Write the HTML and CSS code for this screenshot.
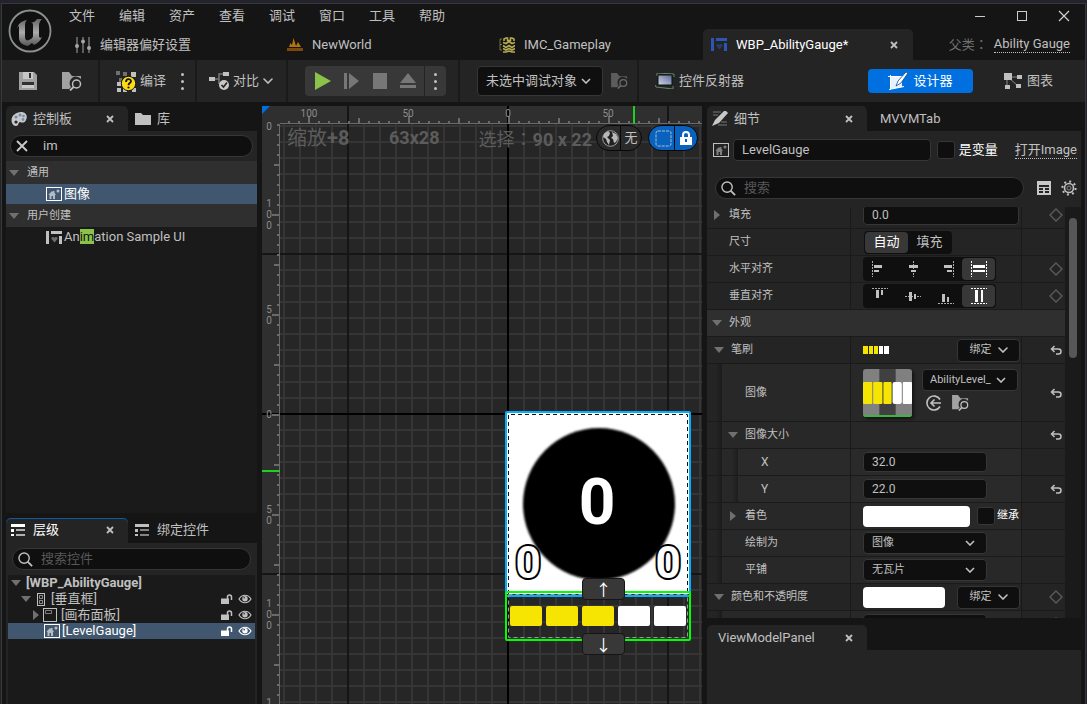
FILE: index.html
```html
<!DOCTYPE html>
<html lang="zh-CN">
<head>
    <meta charset="UTF-8">
    <meta name="viewport" content="width=device-width, initial-scale=1.0">
    <title>WBP_AbilityGauge</title>
    <link rel="stylesheet" href="styles.css">
</head>
<body>
    <!-- shared icons -->
    <svg class="defs" aria-hidden="true">
        <symbol id="i-close" viewBox="0 0 8 8"><path d="M1 1l6 6M7 1L1 7" stroke="currentColor" stroke-width="1.8" fill="none"/></symbol>
        <symbol id="i-chev" viewBox="0 0 10 6"><path d="M1 1l4 4 4-4" stroke="currentColor" stroke-width="1.6" fill="none" stroke-linecap="round"/></symbol>
        <symbol id="i-down" viewBox="0 0 10 6"><path d="M0 0h10L5 6z" fill="#707070"/></symbol>
        <symbol id="i-right" viewBox="0 0 6 10"><path d="M0 0l6 5-6 5z" fill="#707070"/></symbol>
        <symbol id="i-search" viewBox="0 0 16 16"><circle cx="6.5" cy="6.5" r="5.5" stroke="currentColor" stroke-width="1.5" fill="none"/><path d="M10.5 10.5L15 15" stroke="currentColor" stroke-width="2"/></symbol>
        <symbol id="i-browse" viewBox="0 0 20 19"><path d="M0 0h7l3 4h9v3a6 6 0 0 0-10 8l-2 2H0z" fill="currentColor" opacity=".8"/><circle cx="14.500" cy="12" r="4" stroke="currentColor" stroke-width="1.500" fill="none"/><path d="M11.500 15L8 18.500" stroke="currentColor" stroke-width="1.800"/></symbol>
        <symbol id="i-image" viewBox="0 0 16 14"><rect x=".5" y=".5" width="15" height="13" fill="none" stroke="currentColor"/><path d="M2.500 7.500L6 4l1 1V4h1.500v2L10 7.500 9 8v4H7V9H5.500v3H3.500V8z" fill="currentColor" opacity=".6"/><circle cx="12" cy="4" r="1.500" fill="currentColor" opacity=".6"/></symbol>
        <symbol id="i-widget" viewBox="0 0 16 13"><path d="M0 0h3v13H0zM5 0h11v3H5zM13 5h3v8h-3z" fill="currentColor"/><path d="M8.500 11.500L5.500 8a1.500 1.500 0 0 1 3-1 1.500 1.500 0 0 1 3 1z" fill="currentColor" opacity=".5"/></symbol>
        <symbol id="i-list" viewBox="0 0 14 12"><path d="M0 0h14v3H0zM0 5h3v3H0zM0 10h3v2H0z" fill="currentColor"/><path d="M5 5h9v2H5zM5 10h9v2H5z" fill="currentColor" opacity=".65"/></symbol>
        <symbol id="i-unlock" viewBox="0 0 12 11"><path d="M0 4.500h8V10H0z" fill="currentColor"/><path d="M6.500 5V3a2 2 0 0 1 4 0v3" stroke="currentColor" stroke-width="1.500" fill="none"/></symbol>
        <symbol id="i-eye" viewBox="0 0 14 10"><path d="M1 5c3-5 9-5 12 0-3 5-9 5-12 0z" fill="none" stroke="currentColor" stroke-width="1.200"/><circle cx="7" cy="4.800" r="2.700" fill="currentColor"/><circle cx="6.200" cy="3.800" r=".8" fill="#222"/></symbol>
        <symbol id="i-reset" viewBox="0 0 12 10"><path d="M4.500 1L1.500 4l3 3M2 4h6.500a2.300 2.300 0 0 1 0 5H6" stroke="currentColor" stroke-width="1.500" fill="none"/></symbol>
        <symbol id="i-diamond" viewBox="0 0 14 14"><path d="M7 1l6 6-6 6-6-6z" stroke="#5c5c5c" stroke-width="1.300" fill="none"/></symbol>
    </svg>

    <div class="window">
        <header class="header">
            <svg class="logo" viewBox="0 0 44 44" role="img" aria-label="Unreal">
                <defs><linearGradient id="metal" x1="0" y1="0" x2="0" y2="1"><stop offset="0" stop-color="#666"/><stop offset=".5" stop-color="#aaa"/><stop offset="1" stop-color="#555"/></linearGradient></defs>
                <circle cx="22" cy="22" r="20.500" fill="#101010" stroke="#8c9090" stroke-width="1.800"/>
                <path d="M9 20c1-5 4-8 10-9-2 2-2 4-2 6v11c0 3 2 4 4 3 2-1 4-2 4-4V16c0-2-1-2-2-2 3-1 5-2 6-4h5c-2 2-3 4-3 6v11c0 2 2 2 3 1-2 4-4 6-8 8l-2-2-4 3c-6-1-9-4-9-8V18c0-2-1-1-2 2z" fill="url(#metal)"/>
            </svg>
            <div class="header-main">
                <div class="menu-row">
                    <nav class="menu">
                        <button>文件</button><button>编辑</button><button>资产</button><button>查看</button><button>调试</button><button>窗口</button><button>工具</button><button>帮助</button>
                    </nav>
                    <div class="win-buttons">
                        <button aria-label="最小化"><svg width="12" height="12"><path d="M1 6.500h10" stroke="#ccc"/></svg></button>
                        <button aria-label="最大化"><svg width="12" height="12"><rect x="1.500" y="1.500" width="9" height="9" stroke="#ccc" fill="none"/></svg></button>
                        <button aria-label="关闭"><svg width="12" height="12"><path d="M1 1l10 10M11 1L1 11" stroke="#ccc" stroke-width="1.300"/></svg></button>
                    </div>
                </div>
                <div class="doc-tabs">
                    <a href="#" class="doc-tab">
                        <svg width="16" height="16" viewBox="0 0 16 16" fill="#c0c0c0" opacity=".85"><path d="M1.500 0h1v16h-1zM7.500 0h1v16h-1zM13.500 0h1v16h-1z"/><circle cx="2" cy="9" r="2"/><circle cx="8" cy="4.500" r="2"/><circle cx="14" cy="11" r="2"/></svg>
                        <span>编辑器偏好设置</span>
                    </a>
                    <a href="#" class="doc-tab">
                        <svg width="16" height="13" viewBox="0 0 16 13"><path d="M2 9l1.500-4L5 7l1.500-7L9 8l2-4 3 5z" fill="#b8740c"/><path d="M0 10h16v3H0z" fill="#7a4a0a"/></svg>
                        <span>NewWorld</span>
                    </a>
                    <a href="#" class="doc-tab">
                        <svg width="16" height="16" viewBox="0 0 16 16" fill="none" stroke="#b5ab50" stroke-width="1.600"><path d="M3 2H1v11h2M1 7.500h2" stroke-width="1" opacity=".6"/><path d="M5 4V2l2-1h1.500v2.500h3V1H13l2 1v2M4 5.500l3 1 3-2 3 2 3-1M4 8.500l3 2 3-2 3 2 3-2M4 11.500l3 1.500 3-1.500 3 1.500 3-1.500M4 15h3l3-1 3 1h3"/></svg>
                        <span>IMC_Gameplay</span>
                    </a>
                    <a href="#" class="doc-tab active">
                        <svg class="blue" width="16" height="13"><use href="#i-widget"/></svg>
                        <span>WBP_AbilityGauge*</span>
                        <svg class="tab-x" width="8" height="8"><use href="#i-close"/></svg>
                    </a>
                    <div class="parent-class"><span>父类<span class="colon" lang="zh-Hant">：</span></span><a href="#">Ability Gauge</a></div>
                </div>
            </div>
        </header>

        <div class="toolbar">
            <div class="tool-group save-group">
                <button aria-label="保存"><svg width="18" height="18" viewBox="0 0 18 18"><path d="M0 0h15l3 3v15H0z" fill="#a0a0a0"/><path d="M4 0h10v7H4z" fill="#c8c8c8"/><path d="M10 1h2v5h-2zM3 10h12v6H3z" fill="#303030"/><path d="M3 13h12v3H3z" fill="#c8c8c8"/></svg></button>
                <button aria-label="浏览"><svg width="20" height="19"><use href="#i-browse"/></svg></button>
            </div>
            <div class="tool-group compile-group">
                <button>
                    <svg width="20" height="21" viewBox="0 0 20 21"><path d="M0 0h4v4H0zM7 1h4v4H7zM3 7h3v4H3z" fill="#707070"/><path d="M15 1h5v5h-5zM1 11h4v4H1zM1 17h4v4H1zM16 17h4v4h-4zM7 16h4v5H7z" fill="#c0c0c0"/><circle cx="12.500" cy="12.500" r="7.200" fill="#fedc12" stroke="#151515"/><path d="M10 11c0-4 5-3.500 5-.8 0 2-2.500 1.800-2.500 4" stroke="#151515" stroke-width="1.800" fill="none"/><circle cx="12.500" cy="16.500" r="1.100" fill="#151515"/></svg>
                    <span>编译</span>
                </button>
                <button class="dots" aria-label="编译选项"><i></i><i></i><i></i></button>
            </div>
            <div class="tool-group diff-group">
                <button>
                    <svg width="20" height="20" viewBox="0 0 20 20"><path d="M6 8h4V3h5M10 8v5" stroke="#777" stroke-width="1.500" fill="none"/><path d="M0 6h6v4H0zM14 1h6v4h-6z" fill="#c0c0c0"/><circle cx="15" cy="14" r="5" fill="#c8c8c8"/><path d="M12.500 14l2 2 3.500-4.500" stroke="#222" stroke-width="1.600" fill="none"/></svg>
                    <span>对比</span>
                    <svg width="10" height="6"><use href="#i-chev"/></svg>
                </button>
            </div>
            <div class="tool-group play-group">
                <div class="play-box">
                    <button aria-label="播放"><svg width="16" height="18"><path d="M0 0l16 9-16 9z" fill="#8bc24a"/></svg></button>
                    <button aria-label="步进"><svg width="16" height="16"><path d="M0 0h3v16H0zM5 0l10 8-10 8z" fill="#777"/></svg></button>
                    <button aria-label="停止"><svg width="14" height="16"><path d="M0 0h14v16H0z" fill="#777"/></svg></button>
                    <button aria-label="弹出"><svg width="16" height="16"><path d="M8 0l8 10H0zM0 12h16v3H0z" fill="#777"/></svg></button>
                    <button class="dots" aria-label="播放选项"><i></i><i></i><i></i></button>
                </div>
            </div>
            <div class="tool-group debug-group">
                <select class="dropdown debug-select" aria-label="调试对象"><option>未选中调试对象</option></select>
                <button class="dim" aria-label="浏览调试对象"><svg width="17" height="16"><use href="#i-browse"/></svg></button>
            </div>
            <div class="tool-group reflector-group">
                <button>
                    <svg width="20" height="16" viewBox="0 0 20 16"><defs><linearGradient id="scr" x1="0" y1="1" x2="1" y2="0"><stop offset="0" stop-color="#cfd6ec"/><stop offset="1" stop-color="#5d6990"/></linearGradient></defs><path d="M2 3V0l17 1v3M0 12l1 2 17 2v-3" stroke="#5f8a65" fill="none"/><path d="M3 2h14v10H3z" fill="url(#scr)" stroke="#111"/></svg>
                    <span>控件反射器</span>
                </button>
            </div>
            <div class="mode-buttons">
                <button class="designer">
                    <svg width="20" height="19" viewBox="0 0 20 19"><path d="M2 5h12v10L3 17z" fill="#e8f2ff"/><path d="M0 4.500h15M2.500 3v15M1 17.500l15-3" stroke="#fff" fill="none"/><path d="M18 0l2 1-7 10-5 3 2-5z" fill="#fff" stroke="#0a4a92" stroke-width=".8"/></svg>
                    <span>设计器</span>
                </button>
                <button class="graph">
                    <svg width="18" height="16" viewBox="0 0 18 16"><path d="M4 4h11M5 5l9 8M3 6v8" stroke="#888" fill="none"/><path d="M0 0h8v7H0zM13 2h5v4h-5zM1 12h5v4H1zM12 11h5v4h-5z" fill="#c0c0c0"/></svg>
                    <span>图表</span>
                </button>
            </div>
        </div>

        <main class="workspace">
            <aside class="left-col">
                <section class="panel palette">
                    <div class="tabs">
                        <button class="tab active">
                            <svg width="16" height="14" viewBox="0 0 16 14"><path d="M1 11C-1 5 4 0 10 0c5 0 7 4 5 8-1 3-4 3-6 2-2 0-1 4-4 4-2 0-3-1-4-3z" fill="#c8c8c8"/><circle cx="5" cy="10" r="1.600" fill="#252525"/><circle cx="5" cy="5" r="1.500" fill="#6d8db5"/><circle cx="9" cy="3" r="1.500" fill="#6d8db5"/><circle cx="12.500" cy="4" r="1.300" fill="#6d8db5"/><circle cx="12" cy="7.500" r="1.400" fill="#6d8db5"/></svg>
                            <span>控制板</span><svg class="tab-x" width="8" height="8"><use href="#i-close"/></svg>
                        </button>
                        <button class="tab">
                            <svg width="16" height="12" viewBox="0 0 16 12"><path d="M0 0h6l2 2h8v10H0z" fill="#c0c0c0"/></svg><span>库</span>
                        </button>
                    </div>
                    <div class="palette-search">
                        <div class="search">
                            <button aria-label="清除"><svg width="12" height="12" viewBox="0 0 12 12"><path d="M1 1l10 10M11 1L1 11" stroke="#ccc" stroke-width="1.800"/></svg></button>
                            <input type="text" value="im" aria-label="搜索控制板">
                        </div>
                    </div>
                    <div class="palette-list">
                        <div class="category"><svg width="10" height="6"><use href="#i-down"/></svg>通用</div>
                        <div class="entry selected"><svg width="16" height="14"><use href="#i-image"/></svg><span>图像</span></div>
                        <div class="category"><svg width="10" height="6"><use href="#i-down"/></svg>用户创建</div>
                        <div class="entry"><svg width="16" height="13"><use href="#i-widget"/></svg><span>An<mark>im</mark>ation Sample UI</span></div>
                    </div>
                </section>

                <section class="panel hierarchy">
                    <div class="tabs">
                        <button class="tab active focused"><svg width="14" height="12"><use href="#i-list"/></svg><span>层级</span><svg class="tab-x" width="8" height="8"><use href="#i-close"/></svg></button>
                        <button class="tab"><svg width="14" height="12"><use href="#i-list"/></svg><span>绑定控件</span></button>
                    </div>
                    <div class="tree-search">
                        <div class="search"><svg width="15" height="15"><use href="#i-search"/></svg><input type="text" placeholder="搜索控件" aria-label="搜索控件"></div>
                    </div>
                    <ul class="tree">
                        <li class="lv0"><svg width="10" height="6"><use href="#i-down"/></svg><b>[WBP_AbilityGauge]</b></li>
                        <li class="lv1"><svg width="10" height="6"><use href="#i-down"/></svg><svg width="8" height="13" viewBox="0 0 8 13" fill="none" stroke="#c0c0c0"><rect x=".5" y=".5" width="7" height="12"/><path d="M2.500 2.500h3v3h-3zM2.500 7.500h3v3h-3z" opacity=".7"/></svg><span>[垂直框]</span>
                            <span class="row-icons"><svg width="12" height="11"><use href="#i-unlock"/></svg><svg width="14" height="10"><use href="#i-eye"/></svg></span></li>
                        <li class="lv2"><svg width="6" height="10"><use href="#i-right"/></svg><svg width="14" height="14" viewBox="0 0 14 14" fill="none" stroke="#c0c0c0"><rect x=".5" y=".5" width="13" height="13"/><path d="M2.500 2.500h6v3h-6z" opacity=".6"/></svg><span>[画布面板]</span>
                            <span class="row-icons"><svg width="12" height="11"><use href="#i-unlock"/></svg><svg width="14" height="10"><use href="#i-eye"/></svg></span></li>
                        <li class="lv3 selected"><svg width="16" height="14"><use href="#i-image"/></svg><span>[LevelGauge]</span>
                            <span class="row-icons"><svg width="12" height="11"><use href="#i-unlock"/></svg><svg width="14" height="10"><use href="#i-eye"/></svg></span></li>
                    </ul>
                </section>
            </aside>

            <section class="canvas">
                <svg class="grid" width="100%" height="100%">
                    <defs>
                        <pattern id="cells" width="16" height="16" patternUnits="userSpaceOnUse"><path d="M5 0h2v16H5zM0 3h16v2H0z" fill="#353535"/></pattern>
                        <pattern id="major" width="160" height="160" patternUnits="userSpaceOnUse"><path d="M85 0h2v160h-2zM0 147h160v2H0z" fill="#151515"/></pattern>
                        <pattern id="ticks-x" width="100" height="18" patternUnits="userSpaceOnUse"><path d="M46 10h2v7h-2zM96 12h2v5h-2zM6 15h2v2H6zM16 15h2v2h-2zM26 15h2v2h-2zM36 15h2v2h-2zM56 15h2v2h-2zM66 15h2v2h-2zM76 15h2v2h-2zM86 15h2v2h-2z" fill="#6a6a6a"/></pattern>
                        <pattern id="ticks-y" width="18" height="100" patternUnits="userSpaceOnUse"><path d="M10 8h8v2h-8zM12 58h6v2h-6zM15 18h3v2h-3zM15 28h3v2h-3zM15 38h3v2h-3zM15 48h3v2h-3zM15 68h3v2h-3zM15 78h3v2h-3zM15 88h3v2h-3zM15 98h3v2h-3z" fill="#6a6a6a"/></pattern>
                    </defs>
                    <rect width="100%" height="100%" fill="#2f2f2f"/>
                    <rect x="18" y="18" width="100%" height="100%" fill="#262626"/>
                    <rect x="18" y="18" width="100%" height="100%" fill="url(#cells)"/>
                    <rect width="100%" height="100%" fill="url(#major)"/>
                    <path d="M245 0h2v2000h-2zM0 307h2000v2H0z" fill="#000"/>
                    <rect x="18" width="100%" height="18" fill="url(#ticks-x)"/>
                    <rect y="18" width="18" height="100%" fill="url(#ticks-y)"/>
                    <path d="M18 17.500h2000M17.500 18v2000" stroke="#6a6a6a"/>
                    <path d="M0 0h8L0 8z" fill="#0070e0"/>
                    <path d="M371 0h2v18h-2zM0 364h18v2H0z" fill="#1fd01f"/>
                    <g class="ruler-text">
                        <text x="47" y="11">100</text><text x="146" y="11">50</text><text x="246" y="11">0</text><text x="346" y="11">50</text>
                        <text x="7" y="24">0</text>
                        <text x="7" y="101">1</text><text x="7" y="112">0</text><text x="7" y="123">0</text>
                        <text x="7" y="207">5</text><text x="7" y="218">0</text>
                        <text x="7" y="312">0</text>
                        <text x="7" y="407">5</text><text x="7" y="418">0</text>
                        <text x="7" y="501">1</text><text x="7" y="512">0</text><text x="7" y="523">0</text>
                        <text x="7" y="600">1</text>
                    </g>
                </svg>

                <div class="canvas-info">
                    <span class="zoom">缩放<b>+8</b></span>
                    <b>63x28</b>
                    <span class="sel">选择<span class="colon" lang="zh-Hant">：</span><b>90 x 22</b></span>
                    <div class="pill">
                        <button aria-label="本地化预览"><svg width="17" height="17" viewBox="0 0 17 17"><circle cx="8.500" cy="8.500" r="7.800" fill="#202020" stroke="#a0a0a0"/><path d="M2 4l4-3 2 2-1 3-2 1 3 3-1 5-2-3-1-3-3-2zM10 2l4 2 2 4-2 4-2 1-1-4-2-1 2-2z" fill="#b8b8b8"/></svg></button>
                        <button>无</button>
                    </div>
                    <div class="pill on">
                        <button aria-label="显示轮廓"><svg width="17" height="17"><rect x="1" y="1" width="15" height="15" rx="2" fill="none" stroke="#a9bdd3" stroke-dasharray="3 1"/></svg></button>
                        <button aria-label="锁定"><svg width="12" height="14"><path d="M0 6h12v8H0z" fill="#fff"/><path d="M3 7V4a3 3 0 0 1 6 0v3" stroke="#fff" stroke-width="2" fill="none"/><path d="M5 8h2v3H5z" fill="#0a62bf"/></svg></button>
                    </div>
                </div>

                <div class="artboard">
                    <svg width="186" height="230" viewBox="0 0 186 230">
                        <defs><filter id="soft"><feGaussianBlur stdDeviation="1"/></filter></defs>
                        <path d="M2 2h182v181H2z" fill="#fff"/>
                        <circle cx="94" cy="93" r="76" filter="url(#soft)"/>
                        <path d="M3.500 183V3.500h179V183" fill="none" stroke="#111" stroke-dasharray="4 3"/>
                        <text x="92" y="113" class="digit-big">0</text>
                        <text x="23" y="167" class="digit-small">0</text>
                        <text x="163" y="167" class="digit-small">0</text>
                        <rect x="1" y="1" width="184" height="184" rx="1" fill="none" stroke="#00b0ff" stroke-width="2"/>
                        <rect x="1" y="181" width="184" height="48" rx="1" fill="none" stroke="#0f0" stroke-width="2"/>
                        <path d="M3.500 183.500h179v43H3.500z" fill="none" stroke="#999" stroke-dasharray="4 3"/>
                        <g fill="#f6e503"><rect x="5" y="195" width="32" height="20" rx="2"/><rect x="41" y="195" width="32" height="20" rx="2"/><rect x="77" y="195" width="32" height="20" rx="2"/></g>
                        <g fill="#fff"><rect x="113" y="195" width="32" height="20" rx="2"/><rect x="149" y="195" width="32" height="20" rx="2"/></g>
                    </svg>
                    <button class="move up" aria-label="上移">↑</button>
                    <button class="move down" aria-label="下移">↓</button>
                </div>
            </section>

            <aside class="right-col">
                <section class="panel details">
                    <div class="tabs">
                        <button class="tab active"><svg width="16" height="15" viewBox="0 0 16 15"><path d="M14 0l2 2-9 10-7 3 3-6 9-9z" fill="#c8c8c8"/><path d="M1 1h8M1 4h5M9 11h6M6 14h9" stroke="#777"/></svg><span>细节</span><svg class="tab-x" width="8" height="8"><use href="#i-close"/></svg></button>
                        <button class="tab">MVVMTab</button>
                    </div>
                    <div class="details-head">
                        <div class="name-row">
                            <svg width="16" height="14"><use href="#i-image"/></svg>
                            <input class="name-input" type="text" value="LevelGauge" aria-label="名称">
                            <label><input type="checkbox">是变量</label>
                            <a href="#">打开Image</a>
                        </div>
                        <div class="filter-row">
                            <div class="search"><svg width="15" height="15"><use href="#i-search"/></svg><input type="text" placeholder="搜索" aria-label="搜索"></div>
                            <button aria-label="表格视图"><svg width="14" height="14"><path d="M0 0h14v14H0z" fill="#c8c8c8"/><path d="M2 4h10v2H2zM2 7h4v2H2zM8 7h4v2H8zM2 10h4v2H2zM8 10h4v2H8z" fill="#242424"/></svg></button>
                            <button aria-label="设置"><svg width="16" height="16" viewBox="0 0 16 16"><circle cx="8" cy="8" r="4.500" fill="none" stroke="#c0c0c0" stroke-width="1.600"/><circle cx="8" cy="8" r="6.600" fill="none" stroke="#c0c0c0" stroke-width="2" stroke-dasharray="2 3.180"/><circle cx="8" cy="8" r="2" fill="none" stroke="#888"/></svg></button>
                        </div>
                    </div>
                    <div class="props-wrap">
                        <div class="props">
                            <div class="prop"><div class="name"><svg width="6" height="10"><use href="#i-right"/></svg>填充</div><div class="value"><input class="num wide" type="text" value="0.0" aria-label="填充"></div><div class="ext"><svg width="14" height="14"><use href="#i-diamond"/></svg></div></div>
                            <div class="prop"><div class="name plain">尺寸</div><div class="value"><div class="segment"><button class="on">自动</button><button>填充</button></div></div><div class="ext"></div></div>
                            <div class="prop"><div class="name plain">水平对齐</div><div class="value"><div class="align">
                                <button aria-label="左对齐"><svg width="16" height="16"><path d="M.5 0v16" stroke="#aaa" stroke-dasharray="2 1"/><path d="M2 4h8v3H2zM2 9h5v2H2z" fill="#c0c0c0"/></svg></button>
                                <button aria-label="居中"><svg width="16" height="16"><path d="M8.500 0v16" stroke="#aaa" stroke-dasharray="2 1"/><path d="M4 4h9v3H4zM6 9h5v2H6z" fill="#c0c0c0"/></svg></button>
                                <button aria-label="右对齐"><svg width="16" height="16"><path d="M15.500 0v16" stroke="#aaa" stroke-dasharray="2 1"/><path d="M6 4h8v3H6zM9 9h5v2H9z" fill="#c0c0c0"/></svg></button>
                                <button class="on" aria-label="水平填充"><svg width="16" height="16"><path d="M.5 0v16M15.500 0v16" stroke="#fff" stroke-dasharray="2 1"/><path d="M2 4h12v3H2zM2 9h12v2H2z" fill="#fff"/></svg></button>
                            </div></div><div class="ext"><svg width="14" height="14"><use href="#i-diamond"/></svg></div></div>
                            <div class="prop"><div class="name plain">垂直对齐</div><div class="value"><div class="align">
                                <button aria-label="顶部对齐"><svg width="16" height="16"><path d="M0 .5h16" stroke="#aaa" stroke-dasharray="2 1"/><path d="M4 2h3v8H4zM9 2h2v5H9z" fill="#c0c0c0"/></svg></button>
                                <button aria-label="居中"><svg width="16" height="16"><path d="M0 8.500h16" stroke="#aaa" stroke-dasharray="2 1"/><path d="M4 4h3v9H4zM9 6h2v5H9z" fill="#c0c0c0"/></svg></button>
                                <button aria-label="底部对齐"><svg width="16" height="16"><path d="M0 15.500h16" stroke="#aaa" stroke-dasharray="2 1"/><path d="M4 6h3v8H4zM9 9h2v5H9z" fill="#c0c0c0"/></svg></button>
                                <button class="on" aria-label="垂直填充"><svg width="16" height="16"><path d="M0 .5h16M0 15.500h16" stroke="#fff" stroke-dasharray="2 1"/><path d="M4 2h3v12H4zM10 2h2v12h-2z" fill="#fff"/></svg></button>
                            </div></div><div class="ext"><svg width="14" height="14"><use href="#i-diamond"/></svg></div></div>
                            <div class="prop-cat"><svg width="10" height="6"><use href="#i-down"/></svg>外观</div>
                            <div class="prop"><div class="name group"><svg width="10" height="6"><use href="#i-down"/></svg>笔刷</div><div class="value spread"><svg width="26" height="8" viewBox="0 0 26 8"><path d="M0 0h5v8H0zM6 0h4v8H6zM11 0h4v8h-4z" fill="#f6e503"/><path d="M16 0h4v8h-4zM21 0h5v8h-5z" fill="#fff"/></svg><button class="bind">绑定<svg width="10" height="6"><use href="#i-chev"/></svg></button></div><div class="ext"><svg width="12" height="10"><use href="#i-reset"/></svg></div></div>
                            <div class="prop tall d1"><div class="name plain">图像</div><div class="value asset">
                                <svg class="thumb" width="49" height="48" viewBox="0 0 48 48" preserveAspectRatio="none"><path d="M0 0h48v48H0z" fill="#808080"/><path d="M16 0h16v48H16z" fill="#404040"/><g fill="#f6e503"><rect y="13" width="9" height="22" rx="1"/><rect x="10" y="13" width="9" height="22" rx="1"/><rect x="20" y="13" width="8" height="22" rx="1"/></g><g fill="#fff"><rect x="29" y="13" width="9" height="22" rx="2"/><rect x="39" y="13" width="9" height="22" rx="1"/></g><path d="M0 46h48v2H0z" fill="#3fb43f"/></svg>
                                <div class="asset-side">
                                    <select class="dropdown asset-select" aria-label="图像资产"><option>AbilityLevel_</option></select>
                                    <div class="asset-tools">
                                        <button aria-label="使用所选资产"><svg width="16" height="16" viewBox="0 0 16 16" fill="none" stroke="#c0c0c0" stroke-width="1.600"><path d="M14 4.500a7 7 0 1 0 0 7M15 8H5M8.500 4.500L5 8l3.500 3.500"/></svg></button>
                                        <button aria-label="浏览到资产"><svg width="17" height="16"><use href="#i-browse"/></svg></button>
                                    </div>
                                </div></div><div class="ext"><svg width="12" height="10"><use href="#i-reset"/></svg></div></div>
                            <div class="prop d1"><div class="name group"><svg width="10" height="6"><use href="#i-down"/></svg>图像大小</div><div class="value"></div><div class="ext"><svg width="12" height="10"><use href="#i-reset"/></svg></div></div>
                            <div class="prop d2"><div class="name plain">X</div><div class="value"><input class="num" type="text" value="32.0" aria-label="X"></div><div class="ext"></div></div>
                            <div class="prop d2"><div class="name plain">Y</div><div class="value"><input class="num" type="text" value="22.0" aria-label="Y"></div><div class="ext"><svg width="12" height="10"><use href="#i-reset"/></svg></div></div>
                            <div class="prop d1"><div class="name group"><svg class="arrow-r" width="6" height="10"><use href="#i-right"/></svg>着色</div><div class="value tint"><button class="swatch" aria-label="着色"></button><label><input type="checkbox">继承</label></div><div class="ext"></div></div>
                            <div class="prop d1"><div class="name plain">绘制为</div><div class="value"><select class="dropdown" aria-label="绘制为"><option>图像</option></select></div><div class="ext"></div></div>
                            <div class="prop d1"><div class="name plain">平铺</div><div class="value"><select class="dropdown" aria-label="平铺"><option>无瓦片</option></select></div><div class="ext"></div></div>
                            <div class="prop"><div class="name group"><svg width="10" height="6"><use href="#i-down"/></svg>颜色和不透明度</div><div class="value spread"><button class="swatch small" aria-label="颜色和不透明度"></button><button class="bind">绑定<svg width="10" height="6"><use href="#i-chev"/></svg></button></div><div class="ext"><svg width="14" height="14"><use href="#i-diamond"/></svg></div></div>
                            <div class="prop d1"><div class="name"></div><div class="value"><input class="num" type="text" aria-label="R"></div><div class="ext"><svg width="14" height="14"><use href="#i-diamond"/></svg></div></div>
                        </div>
                        <div class="scrollbar"><div class="scroll-thumb"></div></div>
                    </div>
                </section>

                <section class="panel viewmodel">
                    <div class="tabs"><button class="tab active">ViewModelPanel<svg class="tab-x" width="8" height="8"><use href="#i-close"/></svg></button></div>
                </section>
            </aside>
        </main>
    </div>
</body>
</html>
```

FILE: styles.css
```css
* {
    box-sizing: border-box;
}

body {
    margin: 0;
    height: 100vh;
    overflow: hidden;
    background: #22232c;
    color: #c0c0c0;
    font: 13px/16px Roboto, "Noto Sans CJK SC", sans-serif;
}

button, input, select {
    font: inherit;
    color: inherit;
    margin: 0;
    padding: 0;
    border: 0;
    background: none;
}

button {
    display: flex;
    align-items: center;
    justify-content: center;
    white-space: nowrap;
}

a {
    color: inherit;
    text-decoration: none;
}

svg {
    display: block;
    flex: none;
}

.defs {
    position: absolute;
    width: 0;
    height: 0;
}

.colon {
    font-family: "Noto Sans CJK TC", sans-serif;
    line-height: 1;
}

.window {
    display: flex;
    flex-direction: column;
    height: calc(100vh - 3px);
    margin: 3px 1px 0;
    border: 1px solid #383838;
    border-bottom: 0;
    background: #151515;
}

/* header */
.header {
    display: flex;
    height: 56px;
    flex: none;
}

.logo {
    width: 44px;
    height: 44px;
    margin: 5px 14px 0 6px;
}

.header-main {
    flex: 1;
    min-width: 0;
    display: flex;
    flex-direction: column;
}

.menu-row {
    display: flex;
    justify-content: space-between;
    height: 24px;
}

.menu {
    display: flex;
    gap: 24px;
    margin-left: 3px;
}

.win-buttons {
    display: flex;
    gap: 30px;
    margin-right: 15px;
}

.doc-tabs {
    display: flex;
    flex: 1;
    margin-left: 1px;
    padding-top: 1px;
}

.doc-tab {
    display: flex;
    align-items: center;
    gap: 9px;
    width: 212px;
    padding: 0 15px 0 8px;
}

.doc-tab.active {
    width: 210px;
    border-radius: 5px 5px 0 0;
    background: #242424;
    color: #fff;
}

.blue {
    color: #2c55b4;
}

.tab-x {
    margin-left: auto;
    color: #c0c0c0;
}

.parent-class {
    display: flex;
    align-items: center;
    margin-left: auto;
    margin-right: 15px;
    gap: 6px;
    color: #707070;
}

.parent-class a, .name-row a {
    color: #c0c0c0;
    border-bottom: 1px dotted #c0c0c0;
}

/* toolbar */
.toolbar {
    display: flex;
    flex: none;
    height: 42px;
    background: #242424;
}

.tool-group {
    display: flex;
    align-items: center;
    border-right: 2px solid #1a1a1a;
}

.tool-group button {
    gap: 4px;
}

.save-group {
    width: 98px;
    padding-left: 17px;
}

.save-group button + button {
    margin-left: 25px;
}

.compile-group {
    width: 97px;
    padding-left: 16px;
    gap: 14px;
}

.dots {
    flex-direction: column;
    width: 4px;
}

.dots i {
    width: 3px;
    height: 3px;
    border-radius: 50%;
    background: #c0c0c0;
}

.diff-group {
    width: 91px;
    padding-left: 12px;
}

.play-group {
    width: 172px;
    padding-left: 17px;
}

.play-box {
    display: flex;
    align-items: stretch;
    width: 141px;
    height: 30px;
    padding-left: 10px;
    gap: 13px;
    border-radius: 4px;
    background: #383838;
}

.play-box .dots {
    width: 23px;
    margin-left: -5px;
    border-left: 1px solid #242424;
}

.debug-group {
    width: 179px;
    padding-left: 17px;
    gap: 8px;
}

.dim {
    color: #6a6a6a;
}

.reflector-group {
    flex: 1;
    padding-left: 16px;
    border: 0;
}

.mode-buttons {
    display: flex;
    align-items: center;
    padding-right: 32px;
}

.mode-buttons button {
    height: 24px;
    gap: 5px;
}

.mode-buttons .designer {
    width: 105px;
    margin-right: 31px;
    border-radius: 4px;
    background: #0070e0;
    color: #fff;
}

/* panels */
.workspace {
    flex: 1;
    min-height: 0;
    display: grid;
    grid-template-columns: 251px minmax(0, 1fr) 374px;
    gap: 5px;
    padding: 4px 4px 0;
}

.left-col, .right-col {
    display: flex;
    flex-direction: column;
    gap: 5px;
    min-height: 0;
}

.right-col {
    gap: 7px;
}

.panel {
    display: flex;
    flex-direction: column;
    min-height: 0;
    background: #242424;
}

.palette {
    flex: 407;
}

.hierarchy {
    flex: 186;
}

.details {
    flex: 512;
}

.viewmodel {
    flex: 79;
}

.tabs {
    display: flex;
    flex: none;
    height: 25px;
    background: #151515;
}

.tab {
    gap: 6px;
    padding: 0 7px;
}

.tab.active {
    justify-content: flex-start;
    width: 122px;
    padding-right: 14px;
    padding-left: 5px;
    border-radius: 5px 5px 0 0;
    background: #242424;
}

.hierarchy .tab {
    gap: 8px;
    padding-bottom: 2px;
}

.tab.focused {
    box-shadow: inset 0 1px #0a5aa8;
    color: #fff;
}

.right-col .tab.active {
    width: 160px;
}

.details .tab {
    padding-left: 13px;
}

.details .tab.active {
    padding-left: 5px;
}

.viewmodel .tab.active {
    padding-left: 11px;
}

.search {
    display: flex;
    align-items: center;
    flex: 1;
    height: 22px;
    padding: 0 5px;
    gap: 8px;
    border: 1px solid #363636;
    border-radius: 11px;
    background: #0f0f0f;
}

.search input {
    flex: 1;
    min-width: 0;
    padding-bottom: 1px;
    outline: none;
}

.search input::placeholder {
    color: #585858;
}

.palette-search {
    display: flex;
    height: 30px;
    padding: 4px;
}

.palette-search .search {
    gap: 15px;
}

.palette-list {
    flex: 1;
    background: #1a1a1a;
}

.category {
    display: flex;
    align-items: center;
    height: 23px;
    padding-left: 3px;
    gap: 8px;
    background: #2f2f2f;
    font-size: 11px;
}

.entry {
    display: flex;
    align-items: center;
    height: 20px;
    padding-left: 40px;
    gap: 2px;
}

.selected {
    background: #40576f;
    color: #fff;
}

mark {
    background: #8bc24a;
    color: #151515;
}

.tree-search {
    display: flex;
    padding: 5px 6px;
}

.tree {
    flex: 1;
    min-height: 0;
    margin: 0 2px;
    padding: 0;
    list-style: none;
    background: #1a1a1a;
}

.tree li {
    display: flex;
    align-items: center;
    height: 16px;
    gap: 5px;
    padding-right: 3px;
}

.tree .lv0 {
    padding-left: 3px;
}

.tree .lv1 {
    padding-left: 13px;
    gap: 6px;
}

.tree .lv2 {
    padding-left: 25px;
    gap: 4px;
}

.tree .lv3 {
    padding-left: 36px;
    gap: 2px;
}

.row-icons {
    display: flex;
    align-items: center;
    gap: 5px;
    margin-left: auto;
}

/* designer canvas */
.canvas {
    position: relative;
    overflow: hidden;
    background: #262626;
}

.grid {
    position: absolute;
    top: 0;
    left: 0;
}

.ruler-text {
    fill: #8c8c8c;
    font-size: 10px;
    text-anchor: middle;
}

.canvas-info {
    position: relative;
    display: flex;
    align-items: center;
    height: 28px;
    margin: 18px 4px 0 25px;
    color: #5c5c5c;
    font-size: 18px;
    white-space: nowrap;
}

.zoom {
    width: 102px;
    font-size: 20px;
}

.sel {
    margin-left: auto;
    margin-right: 4px;
}

.pill {
    display: flex;
    width: 46px;
    height: 26px;
    border: 1px solid #080808;
    border-radius: 13px;
    background: #2a2a2a;
    color: #c0c0c0;
    font-size: 13px;
}

.pill button {
    flex: 1;
}

.pill button:first-child {
    padding-left: 3px;
}

.pill button + button {
    border-left: 1px solid #080808;
}

.pill.on {
    width: 50px;
    margin-left: 6px;
    background: #0a62bf;
}

.artboard {
    position: absolute;
    left: 243px;
    top: 305px;
}

.digit-big {
    fill: #fff;
    font-size: 64px;
    font-weight: bold;
    text-anchor: middle;
}

.digit-small {
    fill: #fff;
    stroke: #000;
    stroke-width: 4px;
    stroke-linejoin: round;
    paint-order: stroke;
    font-size: 44px;
    font-weight: bold;
    text-anchor: middle;
}

.move {
    position: absolute;
    left: 77px;
    width: 43px;
    height: 22px;
    border: 1px solid #151515;
    border-radius: 4px;
    background: #383838;
    color: #fff;
    font-size: 16px;
    font-family: "Noto Sans CJK SC", sans-serif;
}

.up {
    top: 167px;
}

.down {
    top: 222px;
}

/* details */
.details-head {
    flex: none;
    height: 76px;
    padding: 8px 4px 0 6px;
}

.name-row {
    display: flex;
    align-items: center;
    height: 22px;
    gap: 4px;
}

.name-input {
    flex: 1;
    min-width: 0;
    height: 22px;
    padding: 0 8px 2px;
    border: 1px solid #363636;
    border-radius: 4px;
    background: #0f0f0f;
}

label {
    display: flex;
    align-items: center;
    gap: 4px;
    color: #fff;
    white-space: nowrap;
}

.name-row label {
    margin-left: 2px;
    margin-right: 13px;
}

input[type="checkbox"] {
    appearance: none;
    width: 18px;
    height: 18px;
    border: 1px solid #363636;
    border-radius: 3px;
    background: #0f0f0f;
}

.filter-row {
    display: flex;
    align-items: center;
    margin-top: 16px;
    padding-left: 2px;
}

.filter-row button {
    margin-left: 13px;
}

.filter-row button + button {
    margin-left: 10px;
}

.props-wrap {
    flex: 1;
    min-height: 0;
    display: flex;
    overflow: hidden;
    background: #1a1a1a;
}

.props {
    flex: 1;
    margin-top: -5px;
    font-size: 11px;
}

.prop {
    display: grid;
    grid-template-columns: 144px minmax(0, 1fr) 43px;
    height: 27px;
    border-bottom: 1px solid #1a1a1a;
    background: #242424;
}

.prop.tall {
    height: 58px;
}

.name {
    display: flex;
    align-items: center;
    gap: 9px;
    padding-left: 7px;
    border-right: 1px solid #1a1a1a;
}

.name.plain {
    padding-left: 22px;
}

.name.group {
    gap: 7px;
}

.arrow-r {
    margin: 0 2px;
}

.d1, .d2 {
    background: linear-gradient(90deg, #242424 9px, #1b1b1b 15px, #282828 15px);
}

.d1 .name {
    padding-left: 21px;
}

.d1 .plain {
    padding-left: 38px;
}

.d2 {
    background: linear-gradient(90deg, #242424 9px, #1b1b1b 15px, #282828 15px, #282828 25px, #1d1d1d 31px, #2a2a2a 31px);
}

.d2 .plain {
    padding-left: 54px;
    font-size: 12px;
}

.value {
    display: flex;
    align-items: center;
    padding-left: 12px;
    border-right: 1px solid #1a1a1a;
}

.ext {
    display: flex;
    align-items: center;
    justify-content: center;
    padding-left: 25px;
    background: #242424;
}

.num, .dropdown {
    width: 124px;
    height: 20px;
    padding: 0 8px;
    border: 1px solid #363636;
    border-radius: 4px;
    background: #0f0f0f;
}

.num {
    font-size: 12px;
}

.num.wide {
    width: 156px;
}

.dropdown {
    appearance: none;
    height: 22px;
    background: #0f0f0f url("data:image/svg+xml,%3Csvg xmlns='http://www.w3.org/2000/svg' width='10' height='6'%3E%3Cpath d='M1 1l4 4 4-4' stroke='%23c0c0c0' stroke-width='1.6' fill='none'/%3E%3C/svg%3E") no-repeat right 11px center;
}

.debug-select {
    width: 126px;
    height: 30px;
}

.asset-select {
    width: 96px;
    padding-left: 7px;
}

.segment {
    display: flex;
    height: 23px;
    padding: 1px;
    margin-left: 1px;
    border-radius: 4px;
    background: #0f0f0f;
    font-size: 13px;
}

.segment button {
    width: 43px;
    border-radius: 4px;
}

.align {
    display: flex;
    width: 133px;
    height: 24px;
    padding: 1px;
    border-radius: 4px;
    background: #0f0f0f;
}

.align button {
    flex: 1;
    border-radius: 4px;
}

.segment .on, .align .on {
    background: #383838;
    color: #fff;
}

.prop-cat {
    display: flex;
    align-items: center;
    height: 27px;
    padding-left: 5px;
    gap: 7px;
    border-bottom: 1px solid #1a1a1a;
    background: #2f2f2f;
}

.spread {
    justify-content: space-between;
    padding-right: 1px;
}

.bind {
    width: 63px;
    height: 23px;
    gap: 6px;
    border: 1px solid #363636;
    border-radius: 4px;
    background: #0f0f0f;
}

.value.asset {
    align-items: flex-start;
    padding-top: 5px;
    gap: 10px;
}

.thumb {
    border-radius: 3px;
    box-shadow: 2px 2px 3px #151515;
}

.asset-side {
    display: flex;
    flex-direction: column;
    gap: 4px;
}

.asset-tools {
    display: flex;
    gap: 10px;
    padding-left: 4px;
}

.tint {
    gap: 7px;
}

.tint label {
    gap: 2px;
}

.swatch {
    width: 107px;
    height: 21px;
    border-radius: 4px;
    background: #fff;
}

.swatch.small {
    width: 82px;
}

.scrollbar {
    width: 16px;
    padding: 11px 4px;
}

.scroll-thumb {
    height: 140px;
    border-radius: 4px;
    background: #575757;
}
```
